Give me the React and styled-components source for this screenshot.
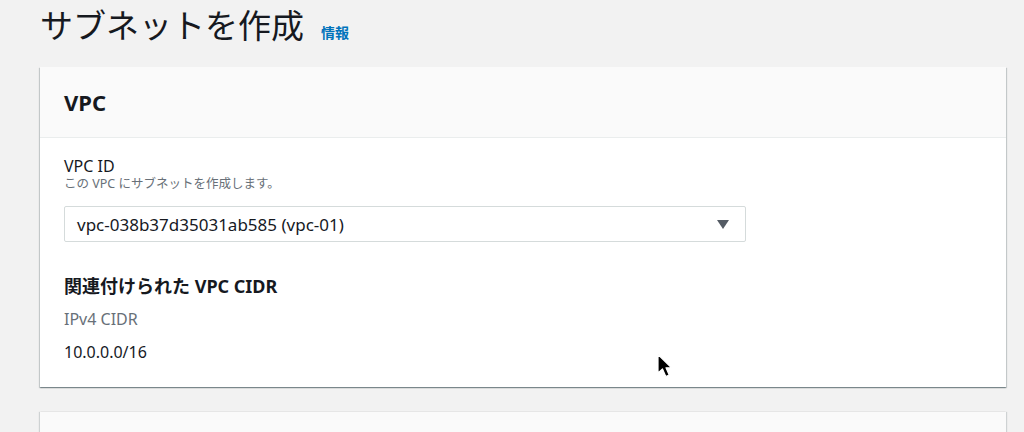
import React from "react";
import styled, { createGlobalStyle } from "styled-components";

const Global = createGlobalStyle`
  html, body { margin: 0; padding: 0; background: #f2f2f2; }
  body {
    font-family: "Noto Sans", "Noto Sans CJK JP", sans-serif;
    color: #16191f;
    overflow: hidden;
  }
`;

const Page = styled.div`
  position: relative;
  width: 1024px;
  height: 432px;
  padding: 0 18px 0 40px;
  box-sizing: border-box;
  overflow: hidden;
`;

const TitleRow = styled.div`
  display: flex;
  align-items: baseline;
  gap: 17px;
  height: 48px;
  margin-bottom: 19px;
`;

const Title = styled.h1`
  margin: 0;
  font-family: "Noto Sans CJK JP", sans-serif;
  font-weight: 400;
  font-size: 33px;
  line-height: 48px;
  color: #16191f;
`;

const InfoLink = styled.a`
  font-family: "Noto Sans CJK JP", sans-serif;
  font-size: 14px;
  font-weight: 700;
  color: #0073bb;
  text-decoration: none;
`;

const Card = styled.section`
  background: #ffffff;
  box-shadow: 0 1px 1px 0 rgba(0, 28, 36, 0.3), 1px 1px 1px 0 rgba(0, 28, 36, 0.15),
    -1px 1px 1px 0 rgba(0, 28, 36, 0.15);
  margin-bottom: 25px;
`;

const CardHeader = styled.header`
  display: flex;
  align-items: center;
  height: 71px;
  padding: 0 24px;
  background: #fafafa;
  border-bottom: 1px solid #eaeded;
  box-sizing: border-box;
`;

const CardTitle = styled.h2`
  margin: 0;
  font-size: 22px;
  font-weight: 700;
  line-height: 30px;
`;

const CardBody = styled.div`
  padding: 18px 24px 25px;
`;

const Label = styled.div`
  font-size: 16px;
  line-height: 20px;
  color: ${(p) => (p.$muted ? "#687078" : "#16191f")};
`;

const Description = styled.div`
  font-size: 12.5px;
  line-height: 16px;
  color: #687078;
`;

const Select = styled.div`
  display: flex;
  align-items: center;
  justify-content: space-between;
  width: 682px;
  height: 36px;
  margin-top: 14px;
  padding: 0 16px 0 12px;
  box-sizing: border-box;
  border: 1px solid #d5dbdb;
  border-radius: 2px;
  background: #fff;
  font-size: 17px;
  color: #16191f;
`;

const Caret = styled.svg`
  width: 12px;
  height: 9px;
  display: block;
`;

const SubHeading = styled.h3`
  margin: 32px 0 0;
  font-size: 18px;
  font-weight: 700;
  line-height: 24px;
`;

const Field = styled.div`
  display: flex;
  flex-direction: column;
  gap: 13px;
  margin-top: 11px;
`;

const NextCard = styled.section`
  background: #fafafa;
  height: 40px;
  box-shadow: 1px 0 1px 0 rgba(0, 28, 36, 0.15), -1px 0 1px 0 rgba(0, 28, 36, 0.15);
`;

const Cursor = styled.svg`
  position: absolute;
  left: 656px;
  top: 353px;
  width: 20px;
  height: 26px;
`;

export default function App() {
  return (
    <>
      <Global />
      <Page>
        <TitleRow>
          <Title>サブネットを作成</Title>
          <InfoLink href="#">情報</InfoLink>
        </TitleRow>
        <Card>
          <CardHeader>
            <CardTitle>VPC</CardTitle>
          </CardHeader>
          <CardBody>
            <Label>VPC ID</Label>
            <Description>この VPC にサブネットを作成します。</Description>
            <Select>
              <span>vpc-038b37d35031ab585 (vpc-01)</span>
              <Caret viewBox="0 0 12 9">
                <path d="M0 0 H12 L6 9 Z" fill="#545b64" />
              </Caret>
            </Select>
            <SubHeading>関連付けられた VPC CIDR</SubHeading>
            <Field>
              <Label $muted>IPv4 CIDR</Label>
              <Label>10.0.0.0/16</Label>
            </Field>
          </CardBody>
        </Card>
        <NextCard />
        <Cursor viewBox="0 0 20 26">
          <path
            d="M2 1.5 L2 20 L6.5 16 L9.8 23.5 L13.2 22 L10 14.8 L15.5 14.8 Z"
            fill="#000"
            stroke="#fff"
            strokeWidth="1.2"
            strokeLinejoin="round"
          />
        </Cursor>
      </Page>
    </>
  );
}
